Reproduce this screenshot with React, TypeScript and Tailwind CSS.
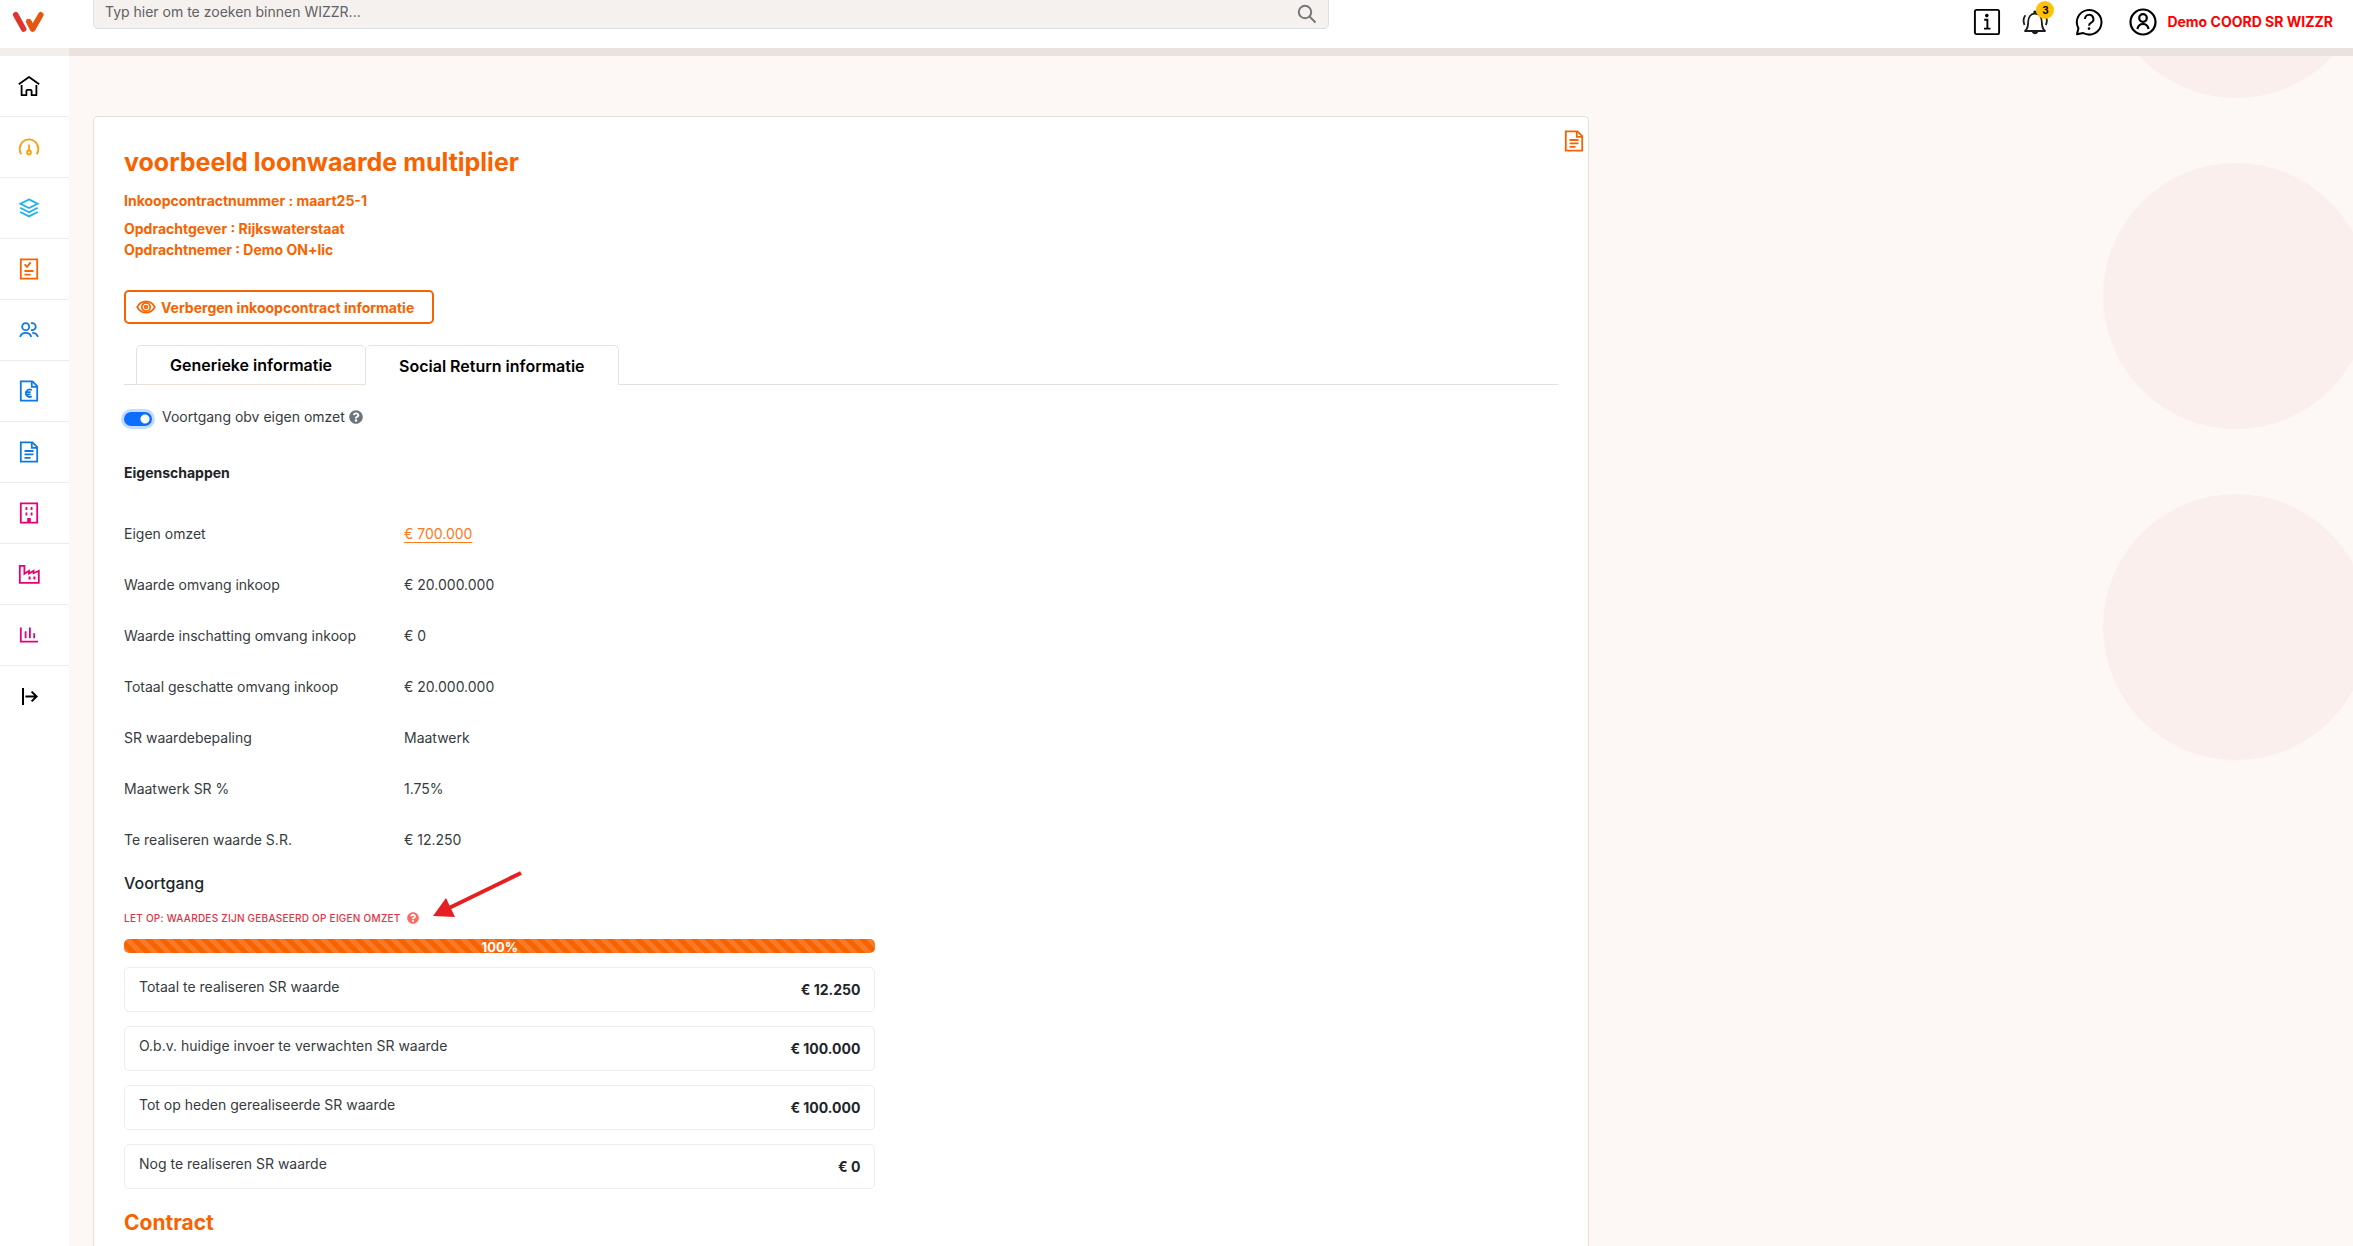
import React, { useState } from "react";
import { FaQuestionCircle } from "react-icons/fa";

interface iconProps {
  children: React.ReactNode;
}

interface menuItem {
  label: string;
  color: string;
  icon: React.ReactNode;
}

const Icon: React.FC<iconProps> = ({ children }) => {
  return (
    <svg
      viewBox="0 0 24 24"
      fill="none"
      stroke="currentColor"
      strokeWidth="1.8"
      className="size-6"
      aria-hidden="true"
    >
      {children}
    </svg>
  );
};

const DocumentIcon: React.FC = () => {
  return (
    <Icon>
      <path d="M3.8 2.4H15.4L20.2 7.2V21.6H3.8Z" />
      <path d="M14.8 2.4V7.8H20.2" />
      <path d="M7.5 11h9M7.5 14.4h9M7.5 17.8h6" />
    </Icon>
  );
};

const menu: menuItem[] = [
  {
    label: "Home",
    color: "text-black",
    icon: (
      <Icon>
        <path d="M1.8 10.2 12 3l10.2 7.2" strokeLinejoin="round" />
        <path d="M4.6 11v10.2H9.4v-4.4a1 1 0 0 1 1-1h3.2a1 1 0 0 1 1 1v4.4h4.8V11" strokeLinejoin="round" />
      </Icon>
    ),
  },
  {
    label: "Dashboard",
    color: "text-[#fb9f05]",
    icon: (
      <Icon>
        <path d="M4.2 19.2A9.4 9.4 0 0 1 2.7 13.6 9.3 9.3 0 0 1 21.3 13.6a9.4 9.4 0 0 1-1.5 5.6" />
        <circle cx="12" cy="17.4" r="1.9" />
        <path d="M12 15.8V9.6" />
      </Icon>
    ),
  },
  {
    label: "Projecten",
    color: "text-[#1fb2ea]",
    icon: (
      <Icon>
        <path d="M12 3.4 20.6 7.7 12 12 3.4 7.7Z" />
        <path d="M3.2 11.8 12 16.2l8.8-4.4M3.2 16 12 20.4l8.8-4.4" />
      </Icon>
    ),
  },
  {
    label: "Contracten",
    color: "text-[#f76300]",
    icon: (
      <Icon>
        <path d="M3.8 2.4H20.2V21.6H3.8Z" />
        <path d="m7.6 7.4 2.4 2.4 3.6-4.4" />
        <path d="M7.5 14h9M7.5 17.6h6.2" />
      </Icon>
    ),
  },
  {
    label: "Personen",
    color: "text-[#0f78e4]",
    icon: (
      <Icon>
        <circle cx="8.7" cy="8.7" r="3.5" />
        <path d="M14 5.2h1.2a3.5 3.5 0 0 1 0 7H14" />
        <path d="M3 18.8c1-2.4 3-3.9 5.7-3.9s4.7 1.5 5.7 3.9" />
        <path d="M15.2 14.9c2.7 0 4.8 1.5 5.8 3.9" />
      </Icon>
    ),
  },
  {
    label: "Facturen",
    color: "text-[#0f78e4]",
    icon: (
      <Icon>
        <path d="M3.8 2.4H15.4L20.2 7.2V21.6H3.8Z" />
        <path d="M14.8 2.4V7.8H20.2" />
        <path d="M14.8 11.2A3.7 3.7 0 1 0 14.8 17.2M8.2 13.2h5.4M8.2 15.4h5.4" />
      </Icon>
    ),
  },
  {
    label: "Documenten",
    color: "text-[#0f78e4]",
    icon: <DocumentIcon />,
  },
  {
    label: "Organisaties",
    color: "text-[#e60073]",
    icon: (
      <Icon>
        <path d="M3.8 2.4H20.2V21.6H3.8Z" />
        <path d="M9.4 6v3M14.6 6v3M9.4 11.4v3M14.6 11.4v3" />
        <path d="M10.2 17h3.6v4h-3.6z" fill="currentColor" stroke="none" />
      </Icon>
    ),
  },
  {
    label: "Industrie",
    color: "text-[#e60073]",
    icon: (
      <Icon>
        <path d="M2.8 3.8H7.4V11.8L12 8.8V11.6L16.6 8.8V11.2L21.8 8.8V20.8H2.8Z" />
        <path d="M12.6 14.6v3M17.4 14.6v3" strokeWidth="2" />
      </Icon>
    ),
  },
  {
    label: "Rapportages",
    color: "text-[#e60073]",
    icon: (
      <Icon>
        <path d="M3.8 4.6V18.6H21" />
        <path d="M8.6 8.2v7M12.9 4.6v10.6M17.2 10.2v5" />
      </Icon>
    ),
  },
  {
    label: "Menu uitklappen",
    color: "text-black",
    icon: (
      <Icon>
        <path d="M6 3v17" strokeWidth="2" />
        <path d="M8.4 11.5H19M14.6 6.6l5 4.9-5 4.9" strokeWidth="2" />
      </Icon>
    ),
  },
];

const properties = [
  { label: "Eigen omzet", value: "€ 700.000", link: true },
  { label: "Waarde omvang inkoop", value: "€ 20.000.000" },
  { label: "Waarde inschatting omvang inkoop", value: "€ 0" },
  { label: "Totaal geschatte omvang inkoop", value: "€ 20.000.000" },
  { label: "SR waardebepaling", value: "Maatwerk" },
  { label: "Maatwerk SR %", value: "1.75%" },
  { label: "Te realiseren waarde S.R.", value: "€ 12.250" },
];

const totals = [
  { label: "Totaal te realiseren SR waarde", value: "€ 12.250" },
  { label: "O.b.v. huidige invoer te verwachten SR waarde", value: "€ 100.000" },
  { label: "Tot op heden gerealiseerde SR waarde", value: "€ 100.000" },
  { label: "Nog te realiseren SR waarde", value: "€ 0" },
];

// HEADER
const Header: React.FC = () => {
  return (
    <header className="flex h-14 bg-white">
      <a
        href="#"
        aria-label="WIZZR"
        className="w-[69px] shrink-0 border-b-8 border-[#f2eeeb] pl-3 pt-[11px]"
      >
        <svg viewBox="12 11 32 22" className="w-8" fill="none" strokeLinecap="round" strokeLinejoin="round" strokeWidth="5.6">
          <path d="M15.8 14.8 23.6 29" stroke="#e0342f" />
          <path d="M28.8 21.6 32.6 29 40.8 14.8" stroke="#e6550f" />
        </svg>
      </a>
      <div className="flex flex-1 justify-between border-b-8 border-[#eae2df] pl-6 pr-3">
        <div className="flex h-12 w-[55%] items-end overflow-hidden pb-[19px]">
          <form className="flex h-[34px] w-full items-center rounded-[5px] border border-[#dcdfe3] bg-[#f5f1ee] px-[11px]">
            <input
              type="text"
              aria-label="Zoeken"
              placeholder="Typ hier om te zoeken binnen WIZZR..."
              className="flex-1 bg-transparent text-sm text-[#495057] outline-none placeholder:text-[#5f6266]"
            />
            <button type="button" aria-label="Zoek" className="text-[#777]">
              <svg viewBox="0 0 20 20" className="mt-1 size-5" fill="none" stroke="currentColor" strokeWidth="2">
                <circle cx="8" cy="8" r="6.2" />
                <path d="m12.5 12.5 6 6" />
              </svg>
            </button>
          </form>
        </div>
        <div className="flex items-center pb-1 pr-2 text-black">
          <button type="button" aria-label="Informatie">
            <svg viewBox="0 0 28 28" className="size-7" fill="none" stroke="currentColor" strokeWidth="1.9">
              <rect x="1.9" y="1.9" width="24.2" height="24.2" rx="1.6" />
              <path d="M11.2 11.8h3.2v8.6M11 20.6h6.4" />
              <circle cx="13.8" cy="7.6" r="1.8" fill="currentColor" stroke="none" />
            </svg>
          </button>
          <button type="button" aria-label="Meldingen" className="relative ml-5">
            <svg viewBox="0 0 28 28" className="size-7" fill="none" stroke="#1c1c1c" strokeWidth="1.8">
              <path d="M4 23c2.8-2.2 3-4.6 3.2-9.2.2-4.8 2.8-8.2 6.8-8.2s6.6 3.4 6.8 8.2c.2 4.6.4 7 3.2 9.2Z" strokeLinejoin="round" />
              <path d="M4.4 7.2C2.2 10.2 2 13.6 3.6 17M24 7.2c2.2 3 2.4 6.4.8 9.8" />
              <path d="M12.4 3.6a1.7 1.7 0 0 1 3.2 0v2h-3.2ZM10.6 23.6h6.8c-.4 1.6-1.8 2.6-3.4 2.6s-3-1-3.4-2.6Z" fill="#1c1c1c" stroke="none" />
            </svg>
            <span className="absolute -right-[5px] -top-[7px] flex size-[18px] items-center justify-center rounded-full bg-[#ffc107] text-[10px] font-bold leading-none">
              3
            </span>
          </button>
          <button type="button" aria-label="Help" className="ml-[26px]">
            <svg viewBox="0 0 28 28" className="size-7" fill="none" stroke="currentColor" strokeWidth="2">
              <path d="M2 26.2 3.4 20.2A12.3 12.3 0 1 1 8.2 25Z" strokeLinejoin="round" />
              <path d="M10 11a4.2 4.2 0 1 1 6.2 3.7c-1.5.8-2.2 1.5-2.2 3" />
              <circle cx="14" cy="20.6" r="1.3" fill="currentColor" stroke="none" />
            </svg>
          </button>
          <button type="button" className="ml-[26px] flex items-center gap-2.5">
            <svg viewBox="0 0 28 28" className="size-7" fill="none" stroke="currentColor" strokeWidth="2.2">
              <circle cx="14" cy="14" r="12.5" />
              <circle cx="14" cy="10" r="3.8" />
              <path d="M8.4 21c.8-3.4 2.8-5 5.6-5s4.8 1.6 5.6 5" />
            </svg>
            <span className="text-sm font-bold text-[#ff0000]">Demo COORD SR WIZZR</span>
          </button>
        </div>
      </div>
    </header>
  );
};

// SIDEBAR
const Sidebar: React.FC = () => {
  return (
    <nav className="w-[69px] shrink-0 bg-white">
      {menu.map((el, index) => (
        <a
          key={el.label}
          href="#"
          aria-label={el.label}
          className={`flex h-[61px] items-center justify-center pr-[11px] ${el.color} ${
            index < menu.length - 1 ? "border-b border-[#ebebeb]" : ""
          }`}
        >
          {el.icon}
        </a>
      ))}
    </nav>
  );
};

// TABS
const Tabs: React.FC = () => {
  return (
    <div role="tablist" className="mt-[21px] flex h-10 text-base font-semibold text-black">
      <div className="w-3 border-b border-[#dee2e6]" />
      <button
        type="button"
        role="tab"
        aria-selected="false"
        className="rounded-t-[5px] border border-[#e8e1db] px-[33px]"
      >
        Generieke informatie
      </button>
      <button
        type="button"
        role="tab"
        aria-selected="true"
        className="rounded-t-[5px] border border-b-0 border-l-0 border-[#e8e1db] px-[33px]"
      >
        Social Return informatie
      </button>
      <div className="flex-1 border-b border-[#dee2e6]" />
    </div>
  );
};

// PROGRESS
const Progress: React.FC = () => {
  return (
    <section className="mt-1.5">
      <h3 className="text-base font-medium leading-6 text-[#212529]">Voortgang</h3>
      <div className="relative mt-[15px] flex h-4 w-fit items-center gap-1.5 text-[#dc3545]">
        <p className="text-[10px] font-medium uppercase tracking-wide">
          Let op: waardes zijn gebaseerd op eigen omzet
        </p>
        <FaQuestionCircle className="size-3 text-[#f86b66]" />
        <svg viewBox="0 0 94 50" className="absolute -top-[41px] left-full ml-3 w-[94px]" aria-hidden="true">
          <path d="M90 4 16 40" stroke="#e62020" strokeWidth="4" />
          <path d="M2 47 15 29 24 48Z" fill="#e62020" />
        </svg>
      </div>
      <div className="w-[52.4%]">
        <div
          role="progressbar"
          aria-valuenow={100}
          aria-label="Voortgang"
          className="mt-[13px] h-3.5 rounded-[5px] bg-[#f76300] bg-[linear-gradient(45deg,rgba(255,255,255,0.15)_25%,transparent_25%,transparent_50%,rgba(255,255,255,0.15)_50%,rgba(255,255,255,0.15)_75%,transparent_75%)] bg-[size:14px_14px]"
        >
          <p className="text-center text-[13px] font-bold leading-4 text-white">100%</p>
        </div>
        <ul className="mt-3.5 flex flex-col gap-3.5">
          {totals.map((el) => (
            <li
              key={el.label}
              className="flex h-[45px] justify-between rounded-[5px] border border-[#ededed] px-3.5 leading-[21px]"
            >
              <span className="pt-2">{el.label}</span>
              <span className="pt-[11px] font-bold text-[#212529]">{el.value}</span>
            </li>
          ))}
        </ul>
      </div>
    </section>
  );
};

// CONTRACT CARD
const ContractCard: React.FC = () => {
  const [ownRevenue, setOwnRevenue] = useState<boolean>(true);

  return (
    <article className="mt-[60px] flex w-2/3 rounded-t-[5px] border border-b-0 border-[#e6dfda] bg-white text-sm text-[#373b40]">
      <div className="flex-1 pb-2 pl-[30px] pt-[30px]">
        <div className="font-bold leading-[21px] text-[#f76300]">
          <h1 className="text-[25px] leading-[30px]">voorbeeld loonwaarde multiplier</h1>
          <p className="mt-[13px]">Inkoopcontractnummer : maart25-1</p>
          <p className="mt-[7px]">Opdrachtgever : Rijkswaterstaat</p>
          <p>Opdrachtnemer : Demo ON+lic</p>
          <button
            type="button"
            className="mt-[30px] flex h-[34px] items-center gap-[5px] rounded-[5px] border-2 border-[#f76300] pl-2.5 pr-[18px]"
          >
            <svg viewBox="0 0 20 14" className="w-5" fill="none" stroke="currentColor" strokeWidth="1.7" aria-hidden="true">
              <path d="M1.2 7C3.2 3.2 6.2 1.3 10 1.3S16.8 3.2 18.8 7C16.8 10.8 13.8 12.7 10 12.7S3.2 10.8 1.2 7Z" />
              <circle cx="10" cy="7" r="4.2" />
              <circle cx="10" cy="7" r="1.4" />
            </svg>
            Verbergen inkoopcontract informatie
          </button>
        </div>

        <Tabs />

        <div className="mt-[21px] flex h-[21px] items-center">
          <input
            id="ownRevenue"
            type="checkbox"
            role="switch"
            checked={ownRevenue}
            onChange={() => setOwnRevenue(!ownRevenue)}
            className="mt-1 h-3.5 w-7 appearance-none rounded-full bg-[#adb5bd] bg-[radial-gradient(circle_at_7px_50%,white_4px,transparent_5px)] ring-3 ring-[#c2dbfe] checked:bg-[#0d6efd] checked:bg-[radial-gradient(circle_at_21px_50%,white_4px,transparent_5px)]"
          />
          <label htmlFor="ownRevenue" className="ml-2.5">
            Voortgang obv eigen omzet
          </label>
          <FaQuestionCircle className="ml-1 size-3.5 text-[#6c757d]" />
        </div>

        <h2 className="mt-[35px] font-bold leading-[21px] text-[#212529]">Eigenschappen</h2>
        <dl className="mt-[25px]">
          {properties.map((el) => (
            <div key={el.label} className="flex h-[51px] items-center">
              <dt className="w-[280px]">{el.label}</dt>
              <dd>
                {el.link ? (
                  <a href="#" className="text-[#fb7a1c] underline underline-offset-3">
                    {el.value}
                  </a>
                ) : (
                  el.value
                )}
              </dd>
            </div>
          ))}
        </dl>

        <Progress />

        <h2 className="mt-[19px] text-[21px] font-bold leading-[30px] text-[#f76300]">Contract</h2>
      </div>
      <div className="w-[30px] shrink-0 pl-1 pt-3">
        <button type="button" aria-label="Document" className="text-[#f76300]">
          <DocumentIcon />
        </button>
      </div>
    </article>
  );
};

const App: React.FC = () => {
  return (
    <div className="flex min-h-screen flex-col bg-[#fdf8f5] font-['Inter','Liberation_Sans',sans-serif]">
      <Header />
      <div className="flex flex-1">
        <Sidebar />
        <main className="flex flex-1 pl-6 pr-4">
          <ContractCard />
          <aside aria-hidden="true" className="-mr-4 flex h-[720px] flex-1 flex-col items-end gap-[65px] overflow-hidden">
            <div className="-mr-4 -mt-[224px] size-[266px] shrink-0 rounded-full bg-[#fbefee]" />
            <div className="-mr-4 size-[266px] shrink-0 rounded-full bg-[#fbefee]" />
            <div className="-mr-4 size-[266px] shrink-0 rounded-full bg-[#fbefee]" />
          </aside>
        </main>
      </div>
    </div>
  );
};

export default App;
